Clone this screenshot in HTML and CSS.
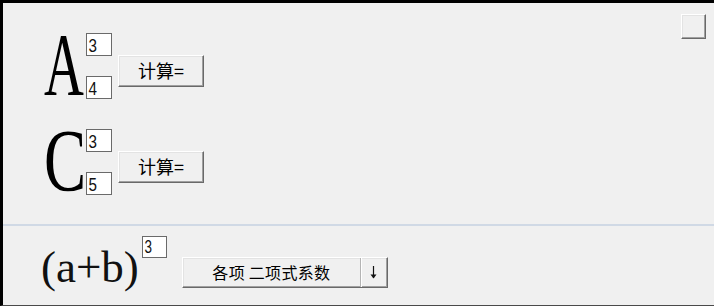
FILE: index.html
```html
<!DOCTYPE html>
<html>
<head>
<meta charset="utf-8">
<link rel="stylesheet" href="styles.css">
</head>
<body>
<div class="frame">
  <div class="top">
    <div class="rows">
      <div class="row">
        <div class="letter"><span class="glyph glyph-a">A</span></div>
        <div class="stack">
          <div class="field"><span>3</span></div>
          <div class="field"><span>4</span></div>
        </div>
        <div class="btn calc">计算=</div>
      </div>
      <div class="row">
        <div class="letter"><span class="glyph glyph-c">C</span></div>
        <div class="stack">
          <div class="field"><span>3</span></div>
          <div class="field"><span>5</span></div>
        </div>
        <div class="btn calc">计算=</div>
      </div>
    </div>
    <div class="btn corner-btn"></div>
  </div>
  <div class="divider"></div>
  <div class="bottom">
    <div class="formula">(a+b)</div>
    <div class="field exp"><span>3</span></div>
    <div class="btn combo">
      <div class="combo-label">各项 二项式系数</div>
      <div class="combo-arrow">
        <svg width="7" height="13" viewBox="0 0 7 13"><path d="M3.5 0V12" stroke="#111" stroke-width="1.2" fill="none"/><path d="M0.5 8.5L3.5 12.5L6.5 8.5Z" fill="#111"/></svg>
      </div>
    </div>
  </div>
</div>
</body>
</html>
```
FILE: styles.css
```css
html, body {
  margin: 0;
  padding: 0;
}
body {
  width: 714px;
  height: 306px;
  overflow: hidden;
  background: #f0f0f0;
  font-family: "Liberation Sans", "Noto Sans CJK SC", sans-serif;
}
.frame {
  box-sizing: border-box;
  width: 714px;
  height: 306px;
  border-top: 3px solid #000;
  border-left: 3px solid #000;
  border-bottom: 1px solid #4a4a4a;
  background: #f0f0f0;
  display: flex;
  flex-direction: column;
}
.top {
  box-sizing: border-box;
  height: 221px;
  display: flex;
  padding-right: 8px;
}
.rows {
  display: flex;
  flex-direction: column;
  gap: 30px;
  padding-top: 30px;
  padding-left: 41px;
}
.row {
  display: flex;
  align-items: flex-start;
  height: 66px;
}
.letter {
  width: 42px;
  height: 62px;
  font-family: "Liberation Serif", serif;
  font-size: 89px;
  line-height: 62px;
  color: #000;
}
.glyph {
  display: inline-block;
  transform-origin: 0 0;
}
.glyph-a { transform: scaleX(0.62); }
.glyph-c { transform: scaleX(0.71); }
.stack {
  display: flex;
  flex-direction: column;
  gap: 20px;
}
.field {
  box-sizing: border-box;
  width: 26px;
  height: 23px;
  border: 1px solid #6a6a6a;
  background: #fff;
}
.field span {
  display: block;
  font-family: "Liberation Sans", sans-serif;
  font-size: 19px;
  line-height: 19px;
  padding: 2px 0 0 2px;
  color: #111;
  transform: scaleX(0.8);
  transform-origin: 0 0;
}
.btn {
  box-sizing: border-box;
  background: #f0f0f0;
  border: 1px solid;
  border-color: #ffffff #696969 #696969 #ffffff;
  box-shadow: inset -1px -1px 0 #a0a0a0, inset 1px 1px 0 #e3e3e3;
}
.calc {
  align-self: flex-end;
  margin-left: 6px;
  margin-bottom: 12px;
  width: 86px;
  height: 32px;
  display: flex;
  align-items: center;
  justify-content: center;
  padding-bottom: 3px;
  font-family: "Noto Sans CJK SC", sans-serif;
  font-size: 18px;
  color: #000;
}
.corner-btn {
  margin-left: auto;
  margin-top: 11px;
  width: 25px;
  height: 25px;
}
.divider {
  height: 2px;
  background: #d0d9e5;
}
.bottom {
  box-sizing: border-box;
  height: 79px;
  display: flex;
  align-items: flex-start;
  padding: 9px 0 0 38px;
}
.formula {
  font-family: "Liberation Serif", serif;
  font-size: 45px;
  line-height: 50px;
  margin-top: 7px;
  color: #111;
}
.field.exp {
  width: 25px;
  height: 22px;
  margin-left: 3px;
  margin-top: 1px;
}
.field.exp span {
  font-size: 18px;
  line-height: 17px;
  transform: scaleX(0.75);
}
.combo {
  margin-left: 15px;
  margin-top: 22px;
  width: 206px;
  height: 31px;
  display: flex;
  font-family: "Noto Sans CJK SC", sans-serif;
  font-size: 16px;
  color: #000;
}
.combo-label {
  flex: 1;
  display: flex;
  align-items: center;
  justify-content: center;
  padding-bottom: 2px;
  letter-spacing: 0.3px;
}
.combo-arrow {
  width: 26px;
  border-left: 1px solid #b4b4b4;
  box-shadow: inset 1px 0 0 #ffffff;
  display: flex;
  align-items: center;
  justify-content: center;
}
.combo-arrow svg {
  display: block;
}
```
